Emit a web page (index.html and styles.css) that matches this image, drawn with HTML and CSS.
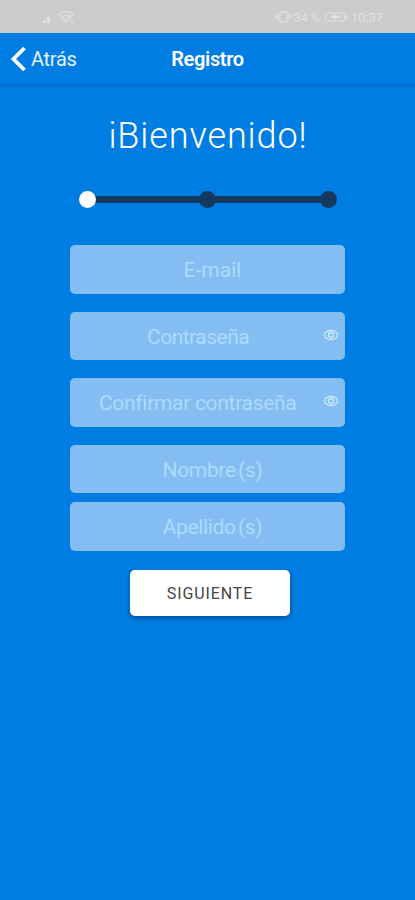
FILE: index.html
```html
<!DOCTYPE html>
<html lang="es">
<head>
<meta charset="utf-8">
<meta name="viewport" content="width=device-width, initial-scale=1">
<title>Registro</title>
<link rel="stylesheet" href="styles.css">
</head>
<body>
<div class="status">
  <svg class="signal" width="34" height="16" viewBox="0 0 34 16" fill="none">
    <path d="M1 14V12L4 10V14ZM5 14V9L8 6V14Z" fill="currentColor"/>
    <path d="M17 5Q24 0 31 5L28 8Q24 5 20 8ZM20 8L24 13L27 9" stroke="currentColor" stroke-width="1.3"/>
    <path d="M29 9V14M31 11V14" stroke="currentColor"/>
  </svg>
  <div class="status-right">
    <svg width="18" height="12" viewBox="0 0 18 12" fill="none" stroke="currentColor" stroke-width="1.3">
      <rect x="5" y="1" width="7" height="10" rx="1"/><path d="M3 2.500V9.500M1 4V8M14 2.500V9.500M16.500 4V8"/>
    </svg>
    <span class="percent">34 %</span>
    <svg class="battery" width="23" height="10" viewBox="0 0 23 10" fill="none" stroke="currentColor">
      <rect x=".5" y="1" width="19" height="8" rx="1.500"/><path d="M21.500 3.500V6.500" stroke-width="2"/><path d="M5 5L11 3V4.500H15L9 7V5.500Z" fill="currentColor"/>
    </svg>
    <span class="clock">10:37</span>
  </div>
</div>
<header class="bar">
  <a class="back">
    <svg width="16" height="26" viewBox="0 0 16 26" fill="none" stroke="currentColor" stroke-width="3.800"><path d="M13.500 2L2.500 13L13.500 24"/></svg>
    <span>Atrás</span>
  </a>
  <h1>Registro</h1>
</header>
<main>
  <h2><span class="raised">¡</span>Bienvenido!</h2>
  <div class="steps"><i class="dot active"></i><i class="line"></i><i class="dot"></i><i class="line"></i><i class="dot"></i></div>
  <form>
    <div class="field"><span class="email">E-mail</span></div>
    <div class="field secret"><span class="pass">Contraseña</span>
      <svg class="eye" width="16" height="12" viewBox="0 0 16 12" fill="none" stroke="currentColor" stroke-width="1.300"><ellipse cx="8" cy="6" rx="6.500" ry="4.500"/><circle cx="8" cy="6" r="2.500"/></svg></div>
    <div class="field secret"><span class="confirm">Confirmar contraseña</span>
      <svg class="eye" width="16" height="12" viewBox="0 0 16 12" fill="none" stroke="currentColor" stroke-width="1.300"><ellipse cx="8" cy="6" rx="6.500" ry="4.500"/><circle cx="8" cy="6" r="2.500"/></svg></div>
    <div class="field close"><span class="name">Nombre (s)</span></div>
    <div class="field"><span class="name">Apellido (s)</span></div>
    <button type="button">SIGUIENTE</button>
  </form>
</main>
</body>
</html>
```
FILE: styles.css
```css
* { box-sizing: border-box; }
body { margin: 0; min-height: 900px; background: #007de2; color: #fff; font-family: Roboto, sans-serif; }
.status { height: 33px; background: #cbcbcb; color: #e0e0e0; display: flex; justify-content: space-between; padding: 9px 32px 0 42px; }
.status-right { display: flex; align-items: center; height: 16px; font-size: 13px; }
.percent { margin-left: 1px; width: 31px; font-size: 12.5px; white-space: nowrap; }
.clock { margin-left: 3px; }
.bar { height: 54px; padding: 0 11px; display: grid; grid-template-columns: 1fr auto 1fr; align-items: center; border-bottom: 3px solid #006fce; }
.back { display: flex; align-items: center; gap: 4px; font-size: 20px; letter-spacing: -.3px; color: #e4f4ff; }
.back svg { color: #fff; }
h1 { margin: 0; font-size: 20px; font-weight: 600; letter-spacing: -.35px; }
main { display: flex; flex-direction: column; align-items: center; }
h2 { margin: 27px 0 0; padding-left: 1px; height: 44px; font-size: 36px; line-height: 44px; font-weight: 300; letter-spacing: .9px; }
.raised { line-height: 0; vertical-align: 7px; }
.steps { width: 258px; height: 18px; margin-top: 32px; display: flex; align-items: center; }
.dot { width: 17px; height: 17px; border-radius: 50%; background: #16395f; flex: none; }
.dot.active { background: #fff; z-index: 1; }
.line { flex: 1; height: 7px; margin: 0 -1px; background: #16395f; }
form { width: 275px; margin-top: 37px; display: flex; flex-direction: column; align-items: center; }
.field { width: 100%; height: 48.500px; margin-bottom: 18px; padding: 2px 0 0 10px; border-radius: 5px; background: #83bdf2; color: #addbfc; display: flex; align-items: center; justify-content: center; font-size: 21px; white-space: nowrap; }
.field.close { margin-bottom: 9px; }
.secret { padding: 0 6px 0 10px; }
.secret span { flex: 1; padding-top: 2px; }
.secret .pass { padding-left: 67px; letter-spacing: -.5px; }
.secret .confirm { padding-left: 19px; letter-spacing: -.3px; }
.name { letter-spacing: -.35px; word-spacing: -2.500px; }
.eye { color: #d0edf6; margin-top: -2px; }
button { width: 160px; height: 46px; margin: 1px 0 0 5px; padding: 1px 0 0 0; border: 0; border-radius: 5px; background: #fff; color: #444; font: 400 16px Roboto, sans-serif; letter-spacing: .9px; box-shadow: 0 2px 5px rgba(0, 35, 90, .55); }
```
